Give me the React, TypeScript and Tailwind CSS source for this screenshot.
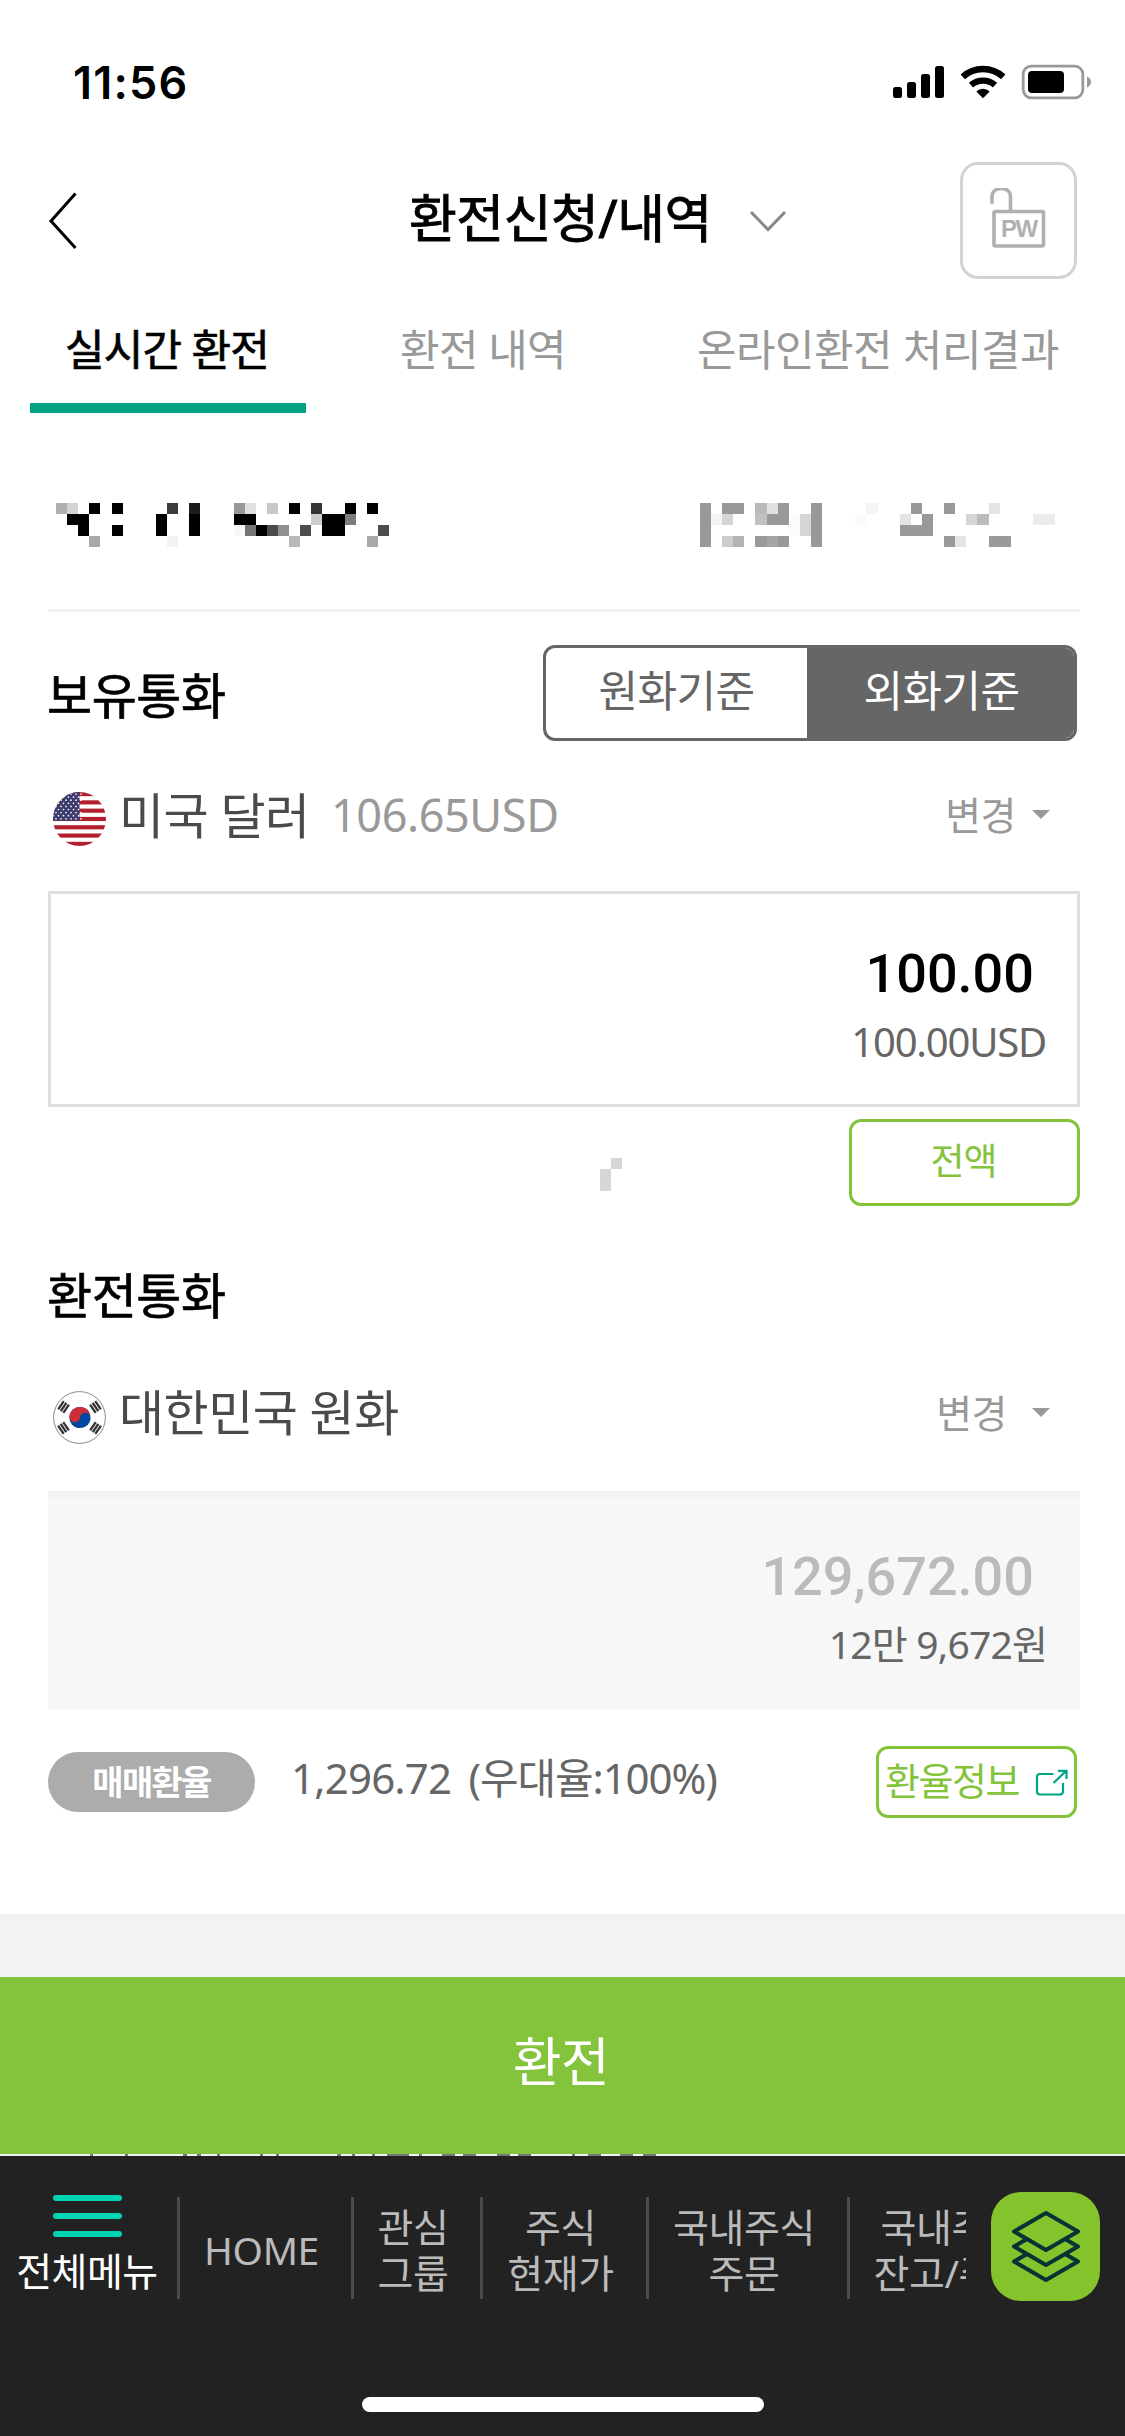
import React from 'react';

// [column, row, color, width in cells, height in cells]
type Cell = [number, number, string, number?, number?];

interface MosaicProps {
  cells: Cell[];
  cols: number;
  rows: number;
  size?: number;
}

const ACCOUNT_CELLS: Cell[] = [
  [0, 0, '#b0b0b0'], [1, 0, '#d3d3d3'], [3, 0, '#000'], [5, 0, '#000'], [10, 0, '#3c3c3c'], [12, 0, '#1c1c1c'],
  [16, 0, '#999'], [17, 0, '#e0e0e0'], [19, 0, '#c8c8c8'], [21, 0, '#000'], [23, 0, '#353535'], [26, 0, '#000'], [28, 0, '#000'],
  [1, 1, '#000', 2], [9, 1, '#000', 1, 2], [12, 1, '#000', 1, 2], [16, 1, '#000', 2], [23, 1, '#cdcdcd'], [24, 1, '#000', 2, 2], [26, 1, '#7d7d7d'],
  [2, 2, '#000'], [5, 2, '#000'], [16, 2, '#f8f8f8'], [17, 2, '#757575'], [18, 2, '#000'], [19, 2, '#4a4a4a'], [20, 2, '#8f8f8f'],
  [22, 2, '#4d4d4d'], [29, 2, '#4d4d4d'],
  [3, 3, '#a8a8a8'], [10, 3, '#f3f3f3'], [21, 3, '#b9b9b9'], [28, 3, '#a8a8a8'],
];

const OWNER_CELLS: Cell[] = [
  [0, 0, '#999', 1, 4], [2, 0, '#999', 2], [5, 0, '#bababa'], [6, 0, '#e1e1e1'], [7, 0, '#999'], [10, 0, '#999', 1, 4],
  [15, 0, '#f5f5f5'], [19, 0, '#999'], [22, 0, '#999'], [26, 0, '#e4e4e4'],
  [1, 1, '#f4f4f4'], [2, 1, '#d5d5d5'], [5, 1, '#c0c0c0'], [6, 1, '#999', 2], [8, 1, '#fbfbfb', 1, 2], [9, 1, '#d5d5d5', 1, 2],
  [14, 1, '#fbfbfb'], [18, 1, '#e3e3e3'], [20, 1, '#999'], [24, 1, '#d5d5d5'], [25, 1, '#bbb'], [30, 1, '#ebebeb', 2],
  [18, 2, '#999', 3],
  [2, 3, '#ccc'], [3, 3, '#b3b3b3'], [5, 3, '#999'], [6, 3, '#a5a5a5'], [7, 3, '#999'], [22, 3, '#999'], [23, 3, '#e4e4e4'], [26, 3, '#999', 2],
];

const HINT_CELLS: Cell[] = [
  [1, 0, '#d6d6d6'], [0, 1, '#d6d6d6', 1, 2],
];

const Mosaic: React.FC<MosaicProps> = ({ cells, cols, rows, size = 11.1 }) => (
  <svg width={cols * size} height={rows * 11} viewBox={`0 0 ${cols} ${rows}`} preserveAspectRatio="none" shapeRendering="crispEdges">
    {cells.map(([x, y, fill, w = 1, h = 1]) => (
      <rect key={`${x}-${y}`} x={x} y={y} width={w} height={h} fill={fill} />
    ))}
  </svg>
);

const StatusIcons = () => (
  <svg width="200" height="36" viewBox="892 64 200 36">
    <rect x="893" y="87" width="9" height="11" rx="2.5" />
    <rect x="907" y="82" width="9" height="16" rx="2.5" />
    <rect x="921" y="74" width="9" height="24" rx="2.5" />
    <rect x="935" y="66" width="9" height="32" rx="2.5" />
    <g fill="none" stroke="#000" strokeWidth="6.4">
      <path d="M962.8 76.8a30 30 0 0 1 40.4 0" />
      <path d="M971 85.2a18 18 0 0 1 24 0" />
    </g>
    <path d="M976.3 91.4a10 10 0 0 1 13.4 0L983 98.2z" />
    <rect x="1023.2" y="66.2" width="59.6" height="31.6" rx="8" fill="none" stroke="#999" strokeWidth="2.8" />
    <rect x="1028" y="71" width="36" height="22" rx="4" />
    <path d="M1087 76.5c2.6 1 4 3 4 5.5s-1.4 4.5-4 5.5z" fill="#999" />
  </svg>
);

const UsFlag = () => (
  <svg width="53" height="54" viewBox="0 0 53 54">
    <clipPath id="us">
      <ellipse cx="26.5" cy="27" rx="26.5" ry="27" />
    </clipPath>
    <g clipPath="url(#us)">
      <rect width="53" height="54" fill="#fff" />
      {Array.from({ length: 7 }).map((_, i) => (
        <rect key={i} y={i * 8.3} width="53" height="4.15" fill="#b2202f" />
      ))}
      <rect width="26.5" height="28.7" fill="#3c3b6e" />
      {Array.from({ length: 9 }).map((_, row) =>
        Array.from({ length: 6 }).map((_, col) => (
          <circle key={`${row}-${col}`} cx={(row % 2 ? 0.5 : 3) + col * 5} cy={2 + row * 3.1} r="0.85" fill="#fff" />
        ))
      )}
    </g>
  </svg>
);

const TRIGRAMS = [
  { x: 10.5, y: 16, rotate: -56 },
  { x: 42.5, y: 16, rotate: 56 },
  { x: 10.5, y: 37, rotate: 56 },
  { x: 42.5, y: 37, rotate: -56 },
];

const KrFlag = () => (
  <svg width="53" height="53" viewBox="0 0 53 53">
    <circle cx="26.5" cy="26.5" r="25.9" fill="#fff" stroke="#888" strokeWidth="1" />
    <g transform="rotate(6 27 26.5)">
      <circle cx="27" cy="26.5" r="10.6" fill="#0047a0" />
      <path d="M16.4 26.5a10.6 10.6 0 0 1 21.2 0a5.3 5.3 0 0 0-10.6 0a5.3 5.3 0 0 1-10.6 0z" fill="#cd2e3a" />
    </g>
    {TRIGRAMS.map((t) => (
      <g key={`${t.x}-${t.y}`} transform={`translate(${t.x} ${t.y}) rotate(${t.rotate})`} fill="#333">
        <rect x="-5" y="-4.2" width="10" height="2.3" />
        <rect x="-5" y="-1.1" width="10" height="2.3" />
        <rect x="-5" y="2" width="10" height="2.3" />
      </g>
    ))}
  </svg>
);

const DownTriangle = () => (
  <svg width="18" height="9" viewBox="0 0 18 9">
    <path d="M0 0h18L9 9z" fill="#999" />
  </svg>
);

// Tops of the letters that peek out between the button and the menu
const PEEK_MARKS = [
  [90, 3], [125, 3], [183, 4], [197, 4], [217, 3], [260, 3], [276, 3], [337, 4], [352, 3], [372, 3], [387, 22], [419, 3],
  [442, 13], [463, 13], [497, 13], [518, 13], [572, 3], [588, 13], [620, 13], [643, 13],
];

const MENU_ITEMS = [
  { lines: ['HOME'], width: 'w-[174px]' },
  { lines: ['관심', '그룹'], width: 'w-[129px]' },
  { lines: ['주식', '현재가'], width: 'w-[166px]' },
  { lines: ['국내주식', '주문'], width: 'w-[201px]' },
  { lines: ['국내주식', '잔고/주문'], width: 'w-[214px]' },
];

export default function App() {
  return (
    <div className="w-[1125px] h-[2436px] overflow-hidden bg-white flex flex-col leading-none whitespace-nowrap font-['Noto_Sans','Noto_Sans_CJK_KR',sans-serif] text-black">
      {/* Status bar */}
      <div className="h-[162px] shrink-0 flex items-center justify-between pt-[2px] pl-[73px] pr-[33px]">
        <span className="font-['Inter',sans-serif] font-semibold text-[45px] tracking-[1.2px]">11:56</span>
        <StatusIcons />
      </div>

      {/* Title */}
      <div className="h-[117px] shrink-0 flex items-center pl-[48px] pr-[48px]">
        <svg width="30" height="58" viewBox="0 0 30 58" fill="none" stroke="#000" strokeWidth="3">
          <path d="M27.5 1.5L3 29l24.5 27" />
        </svg>
        <h1 className="ml-[331px] w-[303px] text-[52px] tracking-[-0.5px] -mt-[6px] [-webkit-text-stroke:0.9px_#000]">환전신청/내역</h1>
        <svg className="ml-[37px]" width="38" height="22" viewBox="0 0 38 22" fill="none" stroke="#888" strokeWidth="3">
          <path d="M2 2l17 17.5L36 2" />
        </svg>
        <button className="ml-auto size-[117px] rounded-[18px] border-[3px] border-[#d3d3d3] flex items-center justify-center">
          <svg width="60" height="66" viewBox="989 187.5 60 66" fill="none" stroke="#b0b0b0" strokeWidth="3.6">
            <rect x="994" y="211" width="49.5" height="34.5" rx="1.5" />
            <path d="M992 202v-5.5c0-5 3.5-8.5 9.3-8.5s9.2 3.5 9.2 8.5V210" strokeLinecap="round" />
            <text x="1018.8" y="236.5" textAnchor="middle" fill="#b0b0b0" stroke="none" className="font-['Liberation_Sans',sans-serif] font-bold text-[24px] tracking-[-1.5px]">PW</text>
          </svg>
        </button>
      </div>

      {/* Tabs */}
      <div className="h-[134px] shrink-0 flex pl-[30px] text-[43px] text-[#999]">
        <div className="w-[276px] border-b-[10px] border-[#00a384] flex justify-center pt-[49px] pr-[2px] text-black tracking-[-0.8px] [-webkit-text-stroke:0.7px_#000]">실시간 환전</div>
        <div className="w-[354px] flex justify-center pt-[49px] tracking-[-0.7px]">환전 내역</div>
        <div className="w-[436px] flex justify-center pt-[49px] tracking-[-0.5px]">온라인환전 처리결과</div>
      </div>

      {/* Account */}
      <div className="h-[199px] shrink-0 mx-[48px] w-[1032px] border-b-[3px] border-[#f2f2f2] flex justify-between pt-[90px] pl-[8px] pr-[25px]">
        <Mosaic cells={ACCOUNT_CELLS} cols={30} rows={4} />
        <Mosaic cells={OWNER_CELLS} cols={32} rows={4} />
      </div>

      {/* Source currency */}
      <div className="h-[162px] shrink-0 flex items-center justify-between pl-[47px] pr-[48px]">
        <h2 className="text-[49px] tracking-[-0.4px] mt-[4px] [-webkit-text-stroke:0.7px_#000]">보유통화</h2>
        <div className="w-[534px] h-[96px] rounded-[12px] border-[3px] border-[#666] overflow-hidden flex text-[43px] tracking-[-0.6px]">
          <div className="w-[261px] h-full flex items-center justify-center pb-[6px] text-[#666]">원화기준</div>
          <div className="flex-1 h-full flex items-center justify-center pb-[6px] pl-[2px] bg-[#666] text-white">외화기준</div>
        </div>
      </div>
      <div className="h-[117px] shrink-0 flex items-start pl-[53px] pr-[75px] pt-[18px]">
        <UsFlag />
        <span className="ml-[13px] mt-[-1px] w-[212px] text-[49px] tracking-[-0.5px] text-[#4a4a4a]">미국 달러</span>
        <span className="text-[45px] tracking-[-0.4px] text-[#999]">106.65USD</span>
        <div className="ml-auto mt-[3px] flex items-center gap-[16px] text-[#999]">
          <span className="text-[39px] tracking-[-0.5px]">변경</span>
          <DownTriangle />
        </div>
      </div>
      <div className="h-[216px] shrink-0 ml-[48px] mr-[45px] border-[3px] border-[#dfdfdf] flex flex-col items-end">
        <span className="mt-[53px] mr-[43px] font-['Roboto',sans-serif] font-medium text-[54px]">100.00</span>
        <span className="mt-[21px] mr-[31px] text-[40px] tracking-[-1.2px] text-[#666]">100.00USD</span>
      </div>
      <div className="h-[99px] shrink-0 flex items-start pt-[12px] pl-[600px] pr-[45px]">
        <div className="mt-[39px]">
          <Mosaic cells={HINT_CELLS} cols={2} rows={3} size={11} />
        </div>
        <button className="ml-auto w-[231px] h-[87px] rounded-[12px] border-[3px] border-[#84c33c] text-[#84c33c] text-[37px] tracking-[-1px] pb-[4px] pr-[2px]">전액</button>
      </div>

      {/* Target currency */}
      <div className="h-[179px] shrink-0 flex items-center pl-[47px]">
        <h2 className="text-[49px] tracking-[-0.4px] -mt-[1px] [-webkit-text-stroke:0.7px_#000]">환전통화</h2>
      </div>
      <div className="h-[106px] shrink-0 flex items-start pl-[53px] pr-[75px] pt-[6px]">
        <KrFlag />
        <span className="ml-[13px] mt-[-3px] text-[49px] tracking-[-0.5px] text-[#4a4a4a]">대한민국 원화</span>
        <div className="ml-auto mt-[2px] flex items-center gap-[25px] text-[#999]">
          <span className="text-[39px] tracking-[-0.5px]">변경</span>
          <DownTriangle />
        </div>
      </div>
      <div className="h-[219px] shrink-0 ml-[48px] mr-[45px] border-t-[6px] border-[#f2f2f2] bg-[#f7f7f7] flex flex-col items-end">
        <span className="mt-[53px] mr-[46px] font-['Roboto',sans-serif] font-medium text-[54px] text-[#bbb]">129,672.00</span>
        <span className="mt-[20px] mr-[33px] text-[39px] tracking-[-0.8px] text-[#666]">12만 9,672원</span>
      </div>

      {/* Exchange rate */}
      <div className="h-[204px] shrink-0 flex items-start pl-[48px] pr-[48px] pt-[36px]">
        <span className="mt-[6px] w-[207px] h-[60px] rounded-full bg-[#acacac] text-white font-bold text-[34px] tracking-[-1.7px] flex items-center justify-center">매매환율</span>
        <span className="ml-[36px] mt-[11px] text-[42px] tracking-[-0.8px] text-[#666]">
          1,296.72 <span className="ml-[7px] tracking-[-1.1px]">(우대율:100%)</span>
        </span>
        <button className="ml-auto w-[201px] h-[72px] rounded-[12px] border-[3px] border-[#84c33c] text-[#84c33c] text-[38px] tracking-[-1.5px] flex items-center pl-[6px] pb-[5px]">
          <span className="w-[150px] text-left">환율정보</span>
          <svg className="mt-[5px]" width="33" height="27" viewBox="0 0 33 27" fill="none" stroke="#00a384" strokeWidth="2.2">
            <path d="M18.5 5H5a3 3 0 0 0-3 3v14.5a3 3 0 0 0 3 3h20a3 3 0 0 0 3-3V14" />
            <path d="M18.5 14L31 2M23 1.8h8.5V10" />
          </svg>
        </button>
      </div>

      <div className="h-[63px] shrink-0 bg-[#f2f2f2]" />
      <button className="h-[177px] shrink-0 bg-[#84c33c] text-white text-[53px] tracking-[-0.5px] pb-[8px] pr-[3px]">환전</button>
      <svg className="shrink-0" width="1125" height="2" viewBox="0 0 1125 2">
        <rect width="1125" height="2" fill="#f2f2f2" />
        {PEEK_MARKS.map(([x, w]) => (
          <rect key={x} x={x} width={w} height="2" fill="#777" />
        ))}
      </svg>

      {/* Bottom menu */}
      <div className="flex-1 bg-[#222] flex flex-col items-center">
        <div className="w-full h-[241px] flex items-start">
          <div className="w-[177px] pt-[39px] pr-[3px] flex flex-col items-center text-white">
            <div className="flex flex-col gap-[12px]">
              <div className="w-[69px] h-[6px] rounded-full bg-[#00d4b4]" />
              <div className="w-[69px] h-[6px] rounded-full bg-[#00d4b4]" />
              <div className="w-[69px] h-[6px] rounded-full bg-[#00d4b4]" />
            </div>
            <span className="mt-[14px] text-[39px] tracking-[-0.5px]">전체메뉴</span>
          </div>
          <div className="mt-[41px] w-[789px] h-[102px] flex overflow-hidden text-[#bbb] text-[39px] leading-[45.5px]">
            {MENU_ITEMS.map((item) => (
              <div key={item.lines.join()} className={`${item.width} shrink-0 h-full border-l-[3px] border-[#4a4a4a] flex flex-col items-center justify-center pt-[3px] pr-[8px] tracking-[-0.4px]`}>
                {item.lines.map((line) => (
                  <span key={line}>{line}</span>
                ))}
              </div>
            ))}
          </div>
          <button className="ml-[25px] mt-[36px] w-[109px] h-[109px] rounded-[30px] bg-[#84c32c] flex items-center justify-center">
            <svg width="72" height="76" viewBox="0 0 72 76" fill="none" stroke="#063333" strokeWidth="4" strokeLinejoin="round">
              <path d="M36 4L68 22.5L36 41L4 22.5z" />
              <path d="M17 30L4 37.5L36 56L68 37.5L55 30" />
              <path d="M17 45L4 52.5L36 71L68 52.5L55 45" />
            </svg>
          </button>
        </div>
        <div className="w-[402px] h-[15px] rounded-full bg-white" />
      </div>
    </div>
  );
}
